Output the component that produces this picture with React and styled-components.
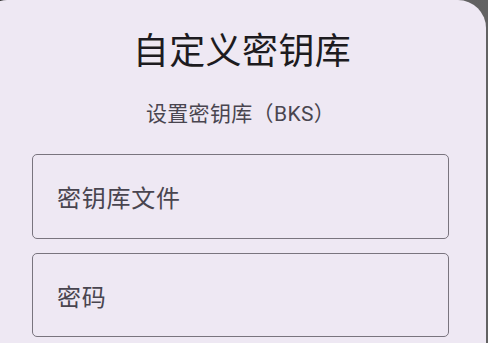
import React from "react"
import styled, { createGlobalStyle } from "styled-components"

const GlobalStyle = createGlobalStyle`
  html, body {
    margin: 0;
    padding: 0;
    overflow: hidden;
  }
  body {
    font-family: Roboto, "Noto Sans CJK SC", sans-serif;
  }
`

const Scrim = styled("div")`
  height: 343px;
  overflow: hidden;
  background: linear-gradient(90deg, #2e2e2e 0, #5a5a5a 40%, #626262 100%);
`

const Dialog = styled("section")`
  margin-left: -21px;
  width: 507px;
  height: 380px;
  box-sizing: border-box;
  padding: 28px 37px 0 53px;
  background: #eee8f3;
  border-radius: 28px 28px 0 0;
  display: flex;
  flex-direction: column;
`

const Title = styled("h2")`
  margin: 0 0 0 3px;
  font-size: 36px;
  line-height: 48px;
  font-weight: 400;
  letter-spacing: 0.4px;
  color: #1d1b20;
  text-align: center;
`

const Subtitle = styled("p")`
  margin: 24px 0 0 0;
  font-size: 21px;
  line-height: 28px;
  letter-spacing: 0.35px;
  color: #49454f;
  text-align: center;
`

const Fields = styled("div")`
  margin-top: 26px;
  display: flex;
  flex-direction: column;
  gap: 14px;
`

const Field = styled("div")`
  height: ${p => p.h}px;
  box-sizing: border-box;
  border: 1px solid #79747e;
  border-radius: 5px;
  padding: 0 24px;
  display: flex;
  align-items: center;
  font-size: 24px;
  letter-spacing: 0.75px;
  color: #49454f;
`

const App = () => (
  <>
    <GlobalStyle />
    <Scrim>
      <Dialog>
        <Title>自定义密钥库</Title>
        <Subtitle>设置密钥库（BKS）</Subtitle>
        <Fields>
          <Field h={85}>密钥库文件</Field>
          <Field h={84}>密码</Field>
        </Fields>
      </Dialog>
    </Scrim>
  </>
)

export default App
